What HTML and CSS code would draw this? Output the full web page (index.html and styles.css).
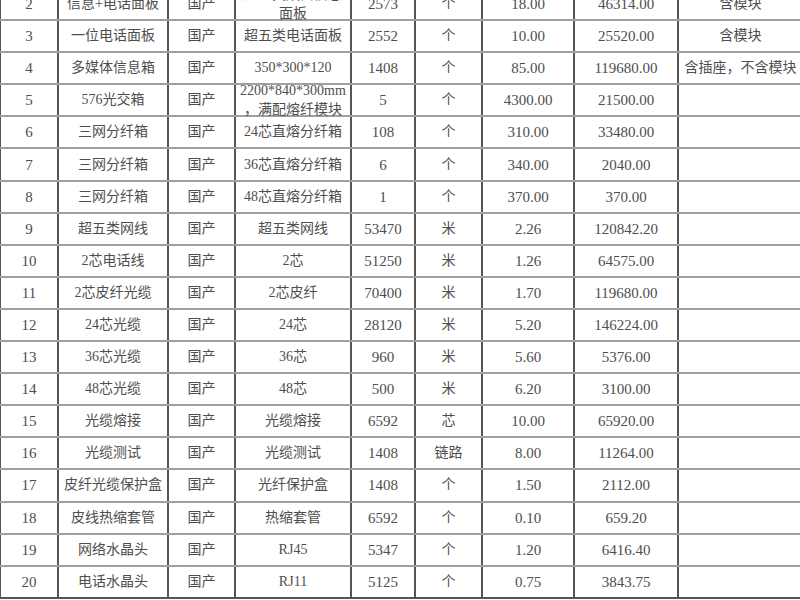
FILE: index.html
```html
<!DOCTYPE html>
<html lang="zh-CN">
<head>
<meta charset="utf-8">
<title>材料清单</title>
<link rel="stylesheet" href="styles.css">
</head>
<body>
<table class="sheet">
  <colgroup>
    <col class="c-no"><col class="c-name"><col class="c-brand"><col class="c-spec"><col class="c-qty"><col class="c-unit"><col class="c-price"><col class="c-total"><col class="c-note">
  </colgroup>
  <tbody>
    <tr><td class="n">2</td><td>信息+电话面板</td><td>国产</td><td class="two"><div class="wrap2"><span>超五类双口信息</span><span>面板</span></div></td><td class="n">2573</td><td>个</td><td class="n">18.00</td><td class="n">46314.00</td><td>含模块</td></tr>
    <tr><td class="n">3</td><td>一位电话面板</td><td>国产</td><td>超五类电话面板</td><td class="n">2552</td><td>个</td><td class="n">10.00</td><td class="n">25520.00</td><td>含模块</td></tr>
    <tr><td class="n">4</td><td>多媒体信息箱</td><td>国产</td><td>350*300*120</td><td class="n">1408</td><td>个</td><td class="n">85.00</td><td class="n">119680.00</td><td>含插座，不含模块</td></tr>
    <tr><td class="n">5</td><td>576光交箱</td><td>国产</td><td class="two"><div class="wrap2"><span>2200*840*300mm</span><span>，满配熔纤模块</span></div></td><td class="n">5</td><td>个</td><td class="n">4300.00</td><td class="n">21500.00</td><td></td></tr>
    <tr><td class="n">6</td><td>三网分纤箱</td><td>国产</td><td>24芯直熔分纤箱</td><td class="n">108</td><td>个</td><td class="n">310.00</td><td class="n">33480.00</td><td></td></tr>
    <tr><td class="n">7</td><td>三网分纤箱</td><td>国产</td><td>36芯直熔分纤箱</td><td class="n">6</td><td>个</td><td class="n">340.00</td><td class="n">2040.00</td><td></td></tr>
    <tr><td class="n">8</td><td>三网分纤箱</td><td>国产</td><td>48芯直熔分纤箱</td><td class="n">1</td><td>个</td><td class="n">370.00</td><td class="n">370.00</td><td></td></tr>
    <tr><td class="n">9</td><td>超五类网线</td><td>国产</td><td>超五类网线</td><td class="n">53470</td><td>米</td><td class="n">2.26</td><td class="n">120842.20</td><td></td></tr>
    <tr><td class="n">10</td><td>2芯电话线</td><td>国产</td><td>2芯</td><td class="n">51250</td><td>米</td><td class="n">1.26</td><td class="n">64575.00</td><td></td></tr>
    <tr><td class="n">11</td><td>2芯皮纤光缆</td><td>国产</td><td>2芯皮纤</td><td class="n">70400</td><td>米</td><td class="n">1.70</td><td class="n">119680.00</td><td></td></tr>
    <tr><td class="n">12</td><td>24芯光缆</td><td>国产</td><td>24芯</td><td class="n">28120</td><td>米</td><td class="n">5.20</td><td class="n">146224.00</td><td></td></tr>
    <tr><td class="n">13</td><td>36芯光缆</td><td>国产</td><td>36芯</td><td class="n">960</td><td>米</td><td class="n">5.60</td><td class="n">5376.00</td><td></td></tr>
    <tr><td class="n">14</td><td>48芯光缆</td><td>国产</td><td>48芯</td><td class="n">500</td><td>米</td><td class="n">6.20</td><td class="n">3100.00</td><td></td></tr>
    <tr><td class="n">15</td><td>光缆熔接</td><td>国产</td><td>光缆熔接</td><td class="n">6592</td><td>芯</td><td class="n">10.00</td><td class="n">65920.00</td><td></td></tr>
    <tr><td class="n">16</td><td>光缆测试</td><td>国产</td><td>光缆测试</td><td class="n">1408</td><td>链路</td><td class="n">8.00</td><td class="n">11264.00</td><td></td></tr>
    <tr><td class="n">17</td><td>皮纤光缆保护盒</td><td>国产</td><td>光纤保护盒</td><td class="n">1408</td><td>个</td><td class="n">1.50</td><td class="n">2112.00</td><td></td></tr>
    <tr><td class="n">18</td><td>皮线热缩套管</td><td>国产</td><td>热缩套管</td><td class="n">6592</td><td>个</td><td class="n">0.10</td><td class="n">659.20</td><td></td></tr>
    <tr><td class="n">19</td><td>网络水晶头</td><td>国产</td><td>RJ45</td><td class="n">5347</td><td>个</td><td class="n">1.20</td><td class="n">6416.40</td><td></td></tr>
    <tr><td class="n">20</td><td>电话水晶头</td><td>国产</td><td>RJ11</td><td class="n">5125</td><td>个</td><td class="n">0.75</td><td class="n">3843.75</td><td></td></tr>
  </tbody>
</table>
</body>
</html>
```
FILE: styles.css
```css
html, body {
  margin: 0;
  padding: 0;
  background: #ffffff;
  overflow: hidden;
}

.sheet {
  border-collapse: collapse;
  table-layout: fixed;
  width: 803px;
  margin: -13px 0 0 -1px;
  font-family: "Liberation Serif", "Noto Sans CJK SC", serif;
  font-size: 14px;
  color: #4e4e4e;
}

.c-no { width: 58px; }
.c-name { width: 110px; }
.c-brand { width: 67px; }
.c-spec { width: 116px; }
.c-qty { width: 64px; }
.c-unit { width: 67px; }
.c-price { width: 92px; }
.c-total { width: 104px; }
.c-note { width: 125px; }

.sheet tr {
  height: 32.1px;
}

.sheet td {
  border-left: 2px solid #555555;
  border-right: 2px solid #555555;
  border-top: 2px solid #a0a0a0;
  border-bottom: 2px solid #a0a0a0;
  padding: 0 1px;
  text-align: center;
  vertical-align: middle;
  line-height: 18px;
  white-space: nowrap;
  overflow: hidden;
}

.sheet tr:last-child td {
  border-bottom-color: #555555;
}

.sheet td.n {
  font-size: 15px;
}

.sheet td.two {
  overflow: visible;
  padding: 0;
}

.wrap2 {
  height: 28px;
  display: flex;
  flex-direction: column;
  justify-content: center;
  align-items: center;
  line-height: 19px;
}
```
